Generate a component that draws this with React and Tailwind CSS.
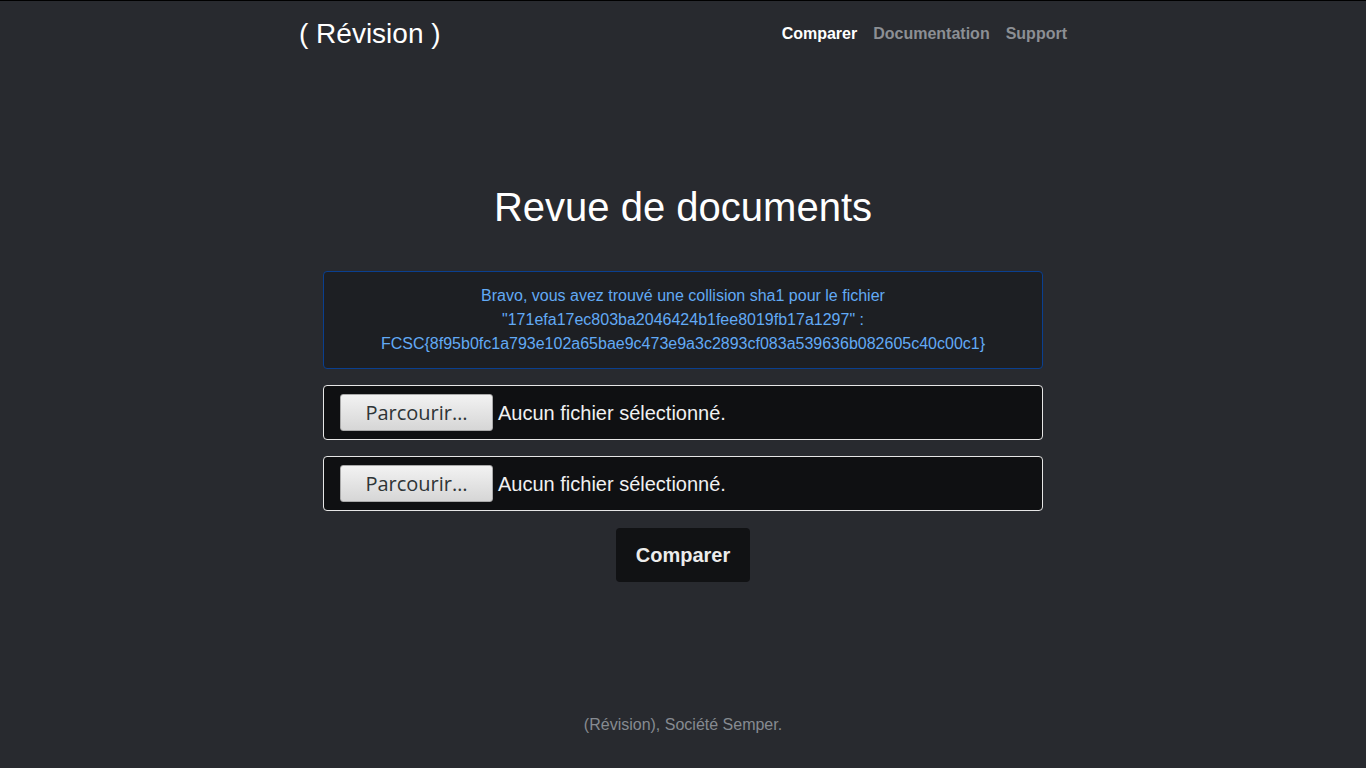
import React from "react";

const FileRow = () => (
  <div className="flex items-center h-[55px] px-4 bg-[#0f1012] border border-[#e6e6e6] rounded-[4px]">
    <span
      className="flex items-center justify-center w-[153px] h-[37px] rounded-[3px] border border-[#a9a9a9] bg-gradient-to-b from-[#f2f2f2] to-[#d6d6d6] text-[#2e3436] text-[20px]"
      style={{ fontFamily: '"Open Sans", "Noto Sans", sans-serif' }}
    >
      Parcourir…
    </span>
    <span className="ml-[5px] text-[20px] text-[#f1f1f1]">Aucun fichier sélectionné.</span>
  </div>
);

export default function App() {
  return (
    <div
      className="h-[768px] flex flex-col bg-[#282a2f] border-t border-black text-white"
      style={{ fontFamily: '"Liberation Sans", Arial, sans-serif' }}
    >
      <header className="w-[768px] mx-auto flex items-center justify-between h-[66px] pb-[1px]">
        <h3 className="text-[28px] leading-none text-white">( Révision )</h3>
        <nav className="flex gap-4 text-[16px] font-bold">
          <span className="text-white">Comparer</span>
          <span className="text-[#8c8f94]">Documentation</span>
          <span className="text-[#8c8f94]">Support</span>
        </nav>
      </header>

      <main className="flex-1 flex flex-col items-center">
        <h1 className="mt-[116px] text-[40px] leading-[48px] text-white">Revue de documents</h1>
        <div className="w-[720px] mt-[40px] flex flex-col gap-4">
          <div className="py-3 px-4 text-center text-[16px] leading-6 text-[#62aaf5] bg-[#1d1f23] border border-[#0a3f8f] rounded-[4px]">
            Bravo, vous avez trouvé une collision sha1 pour le fichier
            <br />
            "171efa17ec803ba2046424b1fee8019fb17a1297" :
            <br />
            FCSC{"{"}8f95b0fc1a793e102a65bae9c473e9a3c2893cf083a539636b082605c40c00c1{"}"}
          </div>
          <FileRow />
          <FileRow />
          <div className="flex justify-center pt-[1px]">
            <button className="h-[54px] px-5 bg-[#111214] rounded-[4px] text-[20px] font-bold text-[#ececec]">
              Comparer
            </button>
          </div>
        </div>
      </main>

      <footer className="h-[55px] text-center text-[16px] text-[#868a91]">
        (Révision), Société Semper.
      </footer>
    </div>
  );
}
